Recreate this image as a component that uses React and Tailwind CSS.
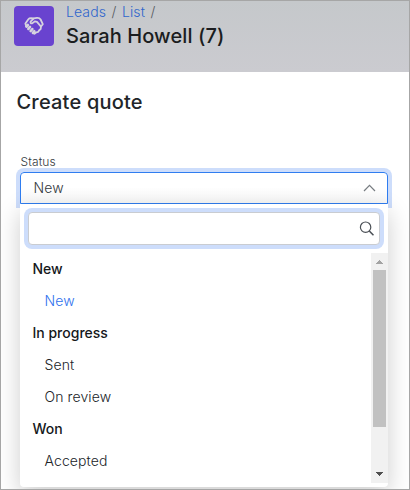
import React from "react";

const groups = [
  { title: "New", items: ["New"] },
  { title: "In progress", items: ["Sent", "On review"] },
  { title: "Won", items: ["Accepted"] },
];

function HandshakeIcon() {
  return (
    <svg width="20" height="20" viewBox="0 0 20 20" fill="none" stroke="#d6d3de" strokeWidth="1.8" strokeLinecap="round" strokeLinejoin="round">
      <path d="M2.2 10 L1.4 7.6 L4.4 3.2 Q5.2 2.1 7 2.1 L9.5 2.3 L13 1.8 Q15.5 1.6 16.6 3.5 L18.8 8.2 L17 10.5 L16.7 13 L15.2 14.2 L14.2 15.9 L12.3 16.3 L10.5 17.8 L8.8 17" />
      <path d="M9.6 2.6 L6.6 5.6 Q6.1 7.8 8.2 7.4 L10.8 5.4 L13 5.9 L16.8 10.3" />
      <path d="M2.4 10.6 L3.8 9 M4.4 12.9 L6 11 M6.7 15 L8.3 13.1 M9 16.9 L10.3 15.3" strokeWidth="2.7" />
    </svg>
  );
}

function Scrollbar() {
  return (
    <div className="flex h-[230px] w-[17px] flex-col items-center bg-[#f1f1f1]">
      <svg width="17" height="17" viewBox="0 0 17 17" shapeRendering="crispEdges">
        <path d="M5 11 L8.5 7 L12 11 Z" fill="#a3a3a3" />
      </svg>
      <div className="h-[157px] w-[13px] bg-[#c1c1c1]" />
      <div className="flex-1" />
      <svg width="17" height="17" viewBox="0 0 17 17" shapeRendering="crispEdges">
        <path d="M5 6 L12 6 L8.5 10 Z" fill="#505050" />
      </svg>
    </div>
  );
}

export default function App() {
  return (
    <div className="h-[490px] w-[410px] overflow-hidden border border-[#a6a6a6] bg-white font-['Inter',sans-serif] text-[#212529]">
      <header className="flex h-[71px] gap-[12px] bg-linear-to-b from-[#c5c8cb] to-[#cbcbd0] pt-[5px] pl-[13px]">
        <div className="flex size-10 items-center justify-center rounded-[4px] bg-[#6943cf]">
          <HandshakeIcon />
        </div>
        <div className="-mt-[3px]">
          <nav className="flex h-[18px] items-center gap-[5.5px] text-[14px] leading-[18px] font-light tracking-[0.1px] text-[#2f66cc]">
            <span>Leads</span>
            <span className="text-[#565a60]">/</span>
            <span>List</span>
            <span className="text-[#565a60]">/</span>
          </nav>
          <h1 className="mt-px text-[20px] leading-7 font-medium tracking-[0.1px] text-[#1b1d20]">Sarah Howell (7)</h1>
        </div>
      </header>

      <main>
        <h2 className="mt-[16px] ml-[15.5px] text-[20px] leading-7 font-medium tracking-[0.2px]">Create quote</h2>
        <label className="mt-[38px] ml-[19.5px] block text-[12px] leading-4 font-light tracking-[0.1px] text-[#343a40]">Status</label>
        <div className="mt-[2px] ml-[19px] w-[368px]">
          <div className="flex h-8 items-center justify-between rounded-t-[4px] border border-[#2f7df0] bg-linear-to-b from-white from-50% to-[#f7f7f7] pr-[11px] pl-[12.5px] text-[14px] leading-[18px] font-light text-[#343a40] ring-4 ring-[#cdddfb]">
            <span className="tracking-[0.1px]">New</span>
            <svg width="13" height="8" viewBox="0 0 13 8" fill="none" stroke="#777c81" strokeWidth="1.2">
              <path d="M1 7 L6.5 1.3 L12 7" />
            </svg>
          </div>
          <div className="relative h-[283px] rounded-b-[4px] bg-white pt-2 shadow-[0_8px_24px_rgba(0,0,0,0.2)]">
            <div className="mx-2 flex h-[33px] items-center justify-end rounded-[4px] border border-[#c9ccd1] bg-white pr-[5px] ring-4 ring-[#cdddfb]">
              <svg width="15" height="15" viewBox="0 0 15 15" fill="none" stroke="#4b5056" strokeWidth="1.2">
                <circle cx="6.6" cy="6.2" r="5.2" />
                <path d="M10.3 10 L14.5 14.3" strokeWidth="1.6" />
              </svg>
            </div>
            <div className="mt-2 flex h-[230px] justify-between overflow-hidden">
              <ul className="text-[14px] leading-8">
                {groups.map((group) => (
                  <li key={group.title}>
                    <div className="pl-[12.5px] font-medium text-[#15181b]">{group.title}</div>
                    <ul>
                      {group.items.map((item) => (
                        <li key={item} className={item === "New" ? "pl-[24.5px] font-light tracking-[0.1px] text-[#2f72ee]" : "pl-[24.5px] font-light tracking-[0.1px] text-[#212529]"}>
                          {item}
                        </li>
                      ))}
                    </ul>
                  </li>
                ))}
              </ul>
              <Scrollbar />
            </div>
          </div>
        </div>
      </main>
    </div>
  );
}
